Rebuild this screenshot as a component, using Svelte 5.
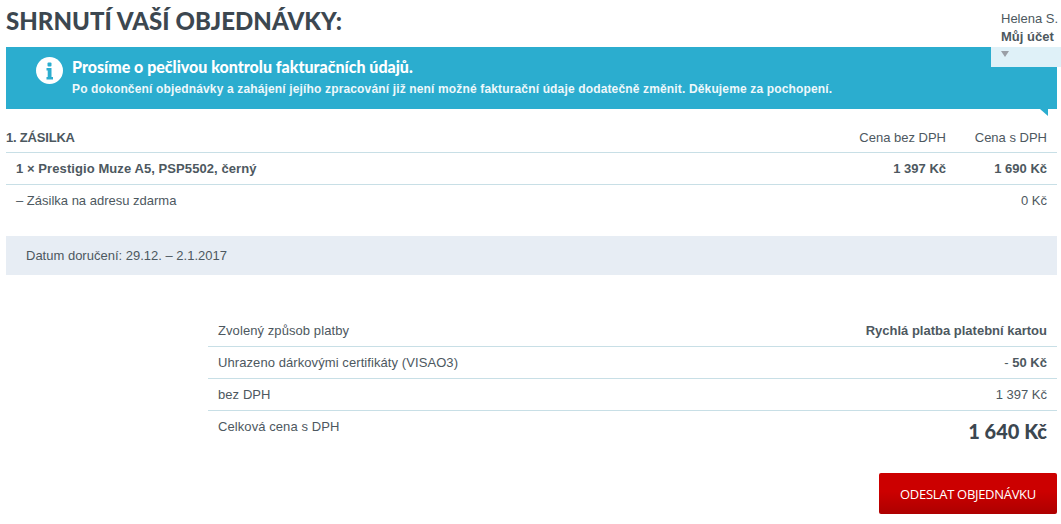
<script>
	const summary = [
		{ label: 'Zvolený způsob platby', value: 'Rychlá platba platební kartou', strong: true },
		{ label: 'Uhrazeno dárkovými certifikáty (VISAO3)', value: '- 50 Kč', partial: true },
		{ label: 'bez DPH', value: '1 397 Kč' }
	];
</script>

<div class="page">
	<header class="top">
		<h1>SHRNUTÍ VAŠÍ OBJEDNÁVKY:</h1>
	</header>

	<div class="account">
		<div class="name">Helena S.</div>
		<div class="link">Můj účet</div>
		<div class="drop"><span class="arrow"></span></div>
	</div>

	<section class="notice">
		<span class="info">
			<svg width="27" height="27" viewBox="0 0 27 27">
				<circle cx="13.5" cy="13.5" r="13.5" fill="#fff" />
				<rect x="11.5" y="5.5" width="4" height="4" rx="1" fill="#2badcf" />
				<path d="M10.5 11h5v9h1.5v2.5h-6.5V20h1.2v-6.5h-1.2z" fill="#2badcf" />
			</svg>
		</span>
		<div class="notice-text">
			<strong>Prosíme o pečlivou kontrolu fakturačních údajů.</strong>
			<p>Po dokončení objednávky a zahájení jejího zpracování již není možné fakturační údaje dodatečně změnit. Děkujeme za pochopení.</p>
		</div>
		<span class="fold"></span>
	</section>

	<section class="shipment">
		<div class="row head">
			<span class="title">1. ZÁSILKA</span>
			<span class="price">Cena bez DPH</span>
			<span class="price">Cena s DPH</span>
		</div>
		<div class="row item">
			<span class="title">1 × Prestigio Muze A5, PSP5502, černý</span>
			<span class="price">1 397 Kč</span>
			<span class="price">1 690 Kč</span>
		</div>
		<div class="row free">
			<span class="title">– Zásilka na adresu zdarma</span>
			<span class="price"></span>
			<span class="price">0 Kč</span>
		</div>
	</section>

	<div class="delivery">Datum doručení: 29.12. – 2.1.2017</div>

	<section class="summary">
		{#each summary as row}
			<div class="sum-row">
				<span class="label">{row.label}</span>
				<span class:strong={row.strong}>
					{#if row.partial}- <b>50 Kč</b>{:else}{row.value}{/if}
				</span>
			</div>
		{/each}
		<div class="sum-row total">
			<span class="label">Celková cena s DPH</span>
			<span class="amount">1 640 Kč</span>
		</div>
	</section>

	<div class="actions">
		<button class="send">ODESLAT OBJEDNÁVKU</button>
	</div>
</div>

<style>
	:global(body) {
		margin: 0;
		background: #fff;
	}

	.page {
		position: relative;
		height: 524px;
		box-sizing: border-box;
		padding: 0 4px 0 6px;
		overflow: hidden;
		font-family: "Liberation Sans", Arial, sans-serif;
		font-size: 13px;
		color: #4d5860;
	}

	.top {
		height: 47px;
	}

	h1 {
		margin: 0;
		padding-top: 6px;
		font-family: Lato, sans-serif;
		font-size: 24px;
		line-height: 30px;
		font-weight: 900;
		letter-spacing: 0.04px;
		color: #3c4750;
	}

	.account {
		position: absolute;
		z-index: 1;
		top: 10px;
		left: 991px;
		width: 70px;
		line-height: 18px;
	}

	.name,
	.link {
		padding-left: 10px;
		white-space: nowrap;
	}

	.link {
		font-weight: 700;
	}

	.drop {
		height: 20px;
		margin-top: 1px;
		padding: 4px 0 0 10px;
		box-sizing: border-box;
		background: #dff1f8;
	}

	.arrow {
		display: block;
		width: 0;
		height: 0;
		border-left: 4px solid transparent;
		border-right: 4px solid transparent;
		border-top: 6px solid #9a9fa6;
	}

	.notice {
		position: relative;
		display: flex;
		align-items: flex-start;
		height: 62px;
		box-sizing: border-box;
		padding: 10px 0 0 30px;
		gap: 9px;
		background: #2badcf;
		color: #fff;
	}

	.info {
		display: block;
		height: 27px;
	}

	.notice-text strong {
		display: block;
		font-family: Lato, sans-serif;
		font-size: 16px;
		line-height: 20px;
		font-weight: 900;
	}

	.notice-text p {
		margin: 4px 0 0;
		font-size: 12px;
		line-height: 16px;
		font-weight: 700;
		letter-spacing: 0.15px;
		opacity: 0.92;
		white-space: nowrap;
	}

	.fold {
		position: absolute;
		right: 9px;
		bottom: -7px;
		width: 0;
		height: 0;
		border-top: 7px solid #2badcf;
		border-left: 8px solid transparent;
	}

	.shipment {
		padding-top: 13px;
	}

	.row {
		display: flex;
		align-items: center;
		height: 32px;
		box-sizing: border-box;
		padding-right: 10px;
		border-bottom: 1px solid #c8dfe6;
	}

	.row .title {
		flex: 1;
	}

	.price {
		text-align: right;
		width: 101px;
		white-space: nowrap;
	}

	.head {
		height: 31px;
	}

	.head .title {
		font-weight: 700;
		letter-spacing: -0.2px;
	}

	.item {
		padding-left: 10px;
		font-weight: 700;
	}

	.item .title {
		letter-spacing: 0.08px;
	}

	.free {
		padding: 0 10px 2px;
		border-bottom: none;
	}

	.delivery {
		height: 39px;
		margin-top: 19px;
		padding-left: 20px;
		line-height: 39px;
		background: #e7edf4;
	}

	.summary {
		margin: 40px 0 0 202px;
	}

	.sum-row {
		display: flex;
		justify-content: space-between;
		align-items: center;
		height: 32px;
		box-sizing: border-box;
		padding: 0 10px;
		border-bottom: 1px solid #c8dfe6;
	}

	.label {
		letter-spacing: 0.08px;
	}

	.strong {
		font-weight: 700;
	}

	.total {
		align-items: flex-start;
		height: 45px;
		padding-top: 8px;
		border-bottom: none;
	}

	.amount {
		font-family: Lato, sans-serif;
		font-size: 20px;
		line-height: 24px;
		font-weight: 900;
		color: #3c4750;
	}

	.actions {
		display: flex;
		justify-content: flex-end;
		margin-top: 17px;
	}

	.send {
		width: 178px;
		height: 41px;
		padding: 0;
		border: none;
		border-radius: 2px;
		background: linear-gradient(#cc0000 45%, #ad0000);
		color: #fff;
		font-family: "Open Sans", sans-serif;
		font-size: 13px;
		letter-spacing: -0.3px;
	}
</style>
